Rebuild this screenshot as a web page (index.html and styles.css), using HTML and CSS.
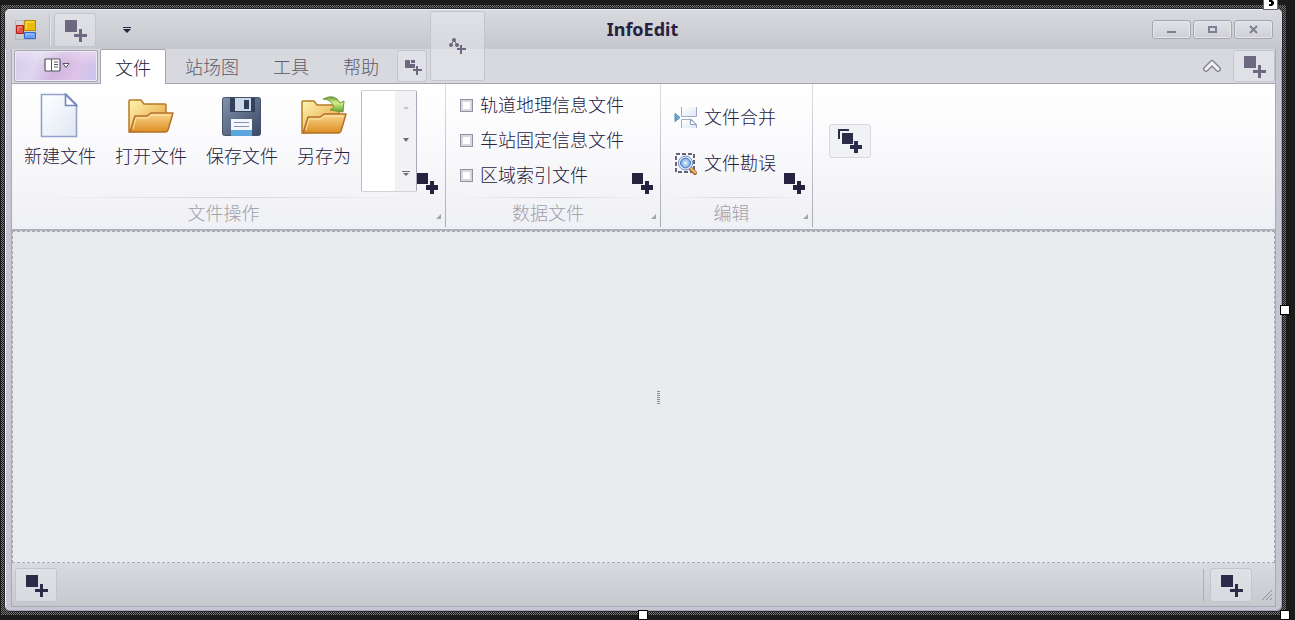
FILE: index.html
```html
<!DOCTYPE html>
<html lang="zh-CN">
<head>
<meta charset="utf-8">
<title>InfoEdit</title>
<link rel="stylesheet" href="styles.css">
</head>
<body>
<svg class="defs" aria-hidden="true">
  <defs>
    <linearGradient id="gold" x1="0" y1="0" x2="1" y2="1"><stop offset="0" stop-color="#fff5b0"/><stop offset="1" stop-color="#e39a35"/></linearGradient>
    <linearGradient id="goldFront" x1="0" y1="0" x2="0" y2="1"><stop offset="0" stop-color="#fbd58c"/><stop offset="1" stop-color="#dc8f24"/></linearGradient>
    <linearGradient id="paper" x1="0" y1="0" x2="1" y2="1"><stop offset="0" stop-color="#ffffff"/><stop offset="1" stop-color="#dfe7f4"/></linearGradient>
    <linearGradient id="steel" x1="0" y1="0" x2="1" y2="1"><stop offset="0" stop-color="#8194ad"/><stop offset="1" stop-color="#3b4663"/></linearGradient>
    <linearGradient id="leaf" x1="0" y1="0" x2="0" y2="1"><stop offset="0" stop-color="#6b9a3c"/><stop offset="0.4" stop-color="#d6f08a"/><stop offset="1" stop-color="#5fa02c"/></linearGradient>
    <radialGradient id="lens"><stop offset="0" stop-color="#e6f6ff"/><stop offset="1" stop-color="#6fa3df"/></radialGradient>
    <symbol id="add" viewBox="0 0 22 22"><path d="M0 0h12v12H0zM14 9h3v5h5v3h-5v5h-3v-5H9v-3h5z" fill="currentColor"/></symbol>
    <symbol id="add-bold" viewBox="0 0 22 22"><path d="M0 0h11v11H0zM13 8h4v4h4v5h-4v4h-4v-4H9v-5h4z" fill="currentColor"/></symbol>
    <symbol id="folder" viewBox="0 0 48 48">
      <path d="M2 40V9q0-1 1-1h11l3 4h21q1 0 1 1v25z" fill="url(#gold)" stroke="#b67a26" stroke-width="1.500"/>
      <path d="M3 40 8 24h12l4-3h22l-5 17q-1 2-2 2z" fill="url(#goldFront)" stroke="#b4702a" stroke-width="1.500" stroke-linejoin="round"/>
      <path d="M6 37 9 26h12l4-3h18" fill="none" stroke="#ffe7ad"/>
    </symbol>
  </defs>
</svg>
<div class="selection">
  <main class="window">
    <header class="titlebar">
      <svg class="app-icon" viewBox="0 0 22 22" role="img" aria-label="InfoEdit">
        <path d="M.5 1.500h20v19H.5zM9 1v20M0 14h20" fill="none" stroke="#b5b7bd"/>
        <path d="M9.500 1.500h11v10h-11z" fill="#eeb90d" stroke="#b98708"/><path d="M11 10V3h8" fill="none" stroke="#ffe574"/>
        <path d="M1.500 6.500h7v8h-7z" fill="#df5145" stroke="#b61f18"/><path d="M3 12V8h4" fill="none" stroke="#f7aaa0"/>
        <path d="M9.500 13.500h11v6h-11z" fill="#6fa0f5" stroke="#3669c6"/><path d="M11 17v-2h8" fill="none" stroke="#a9caff"/>
      </svg>
      <span class="quick-rule"></span>
      <button class="add-button dim" aria-label="添加快速访问项"><svg class="add-icon"><use href="#add"/></svg></button>
      <button class="plain quick-menu" aria-label="自定义快速访问"><svg width="8" height="6" viewBox="0 0 8 6"><path d="M0 0h8v1H0zM0 2h8L4 6z" fill="#25213f"/></svg></button>
      <h1 class="title">InfoEdit</h1>
      <div class="window-buttons">
        <button aria-label="最小化"><svg width="10" height="10" viewBox="0 0 10 10"><path d="M0 6h9v2H0z" fill="#817f92"/></svg></button>
        <button aria-label="最大化"><svg width="10" height="10" viewBox="0 0 10 10"><path d="M1 2h7v5H1z" fill="none" stroke="#817f92" stroke-width="2"/></svg></button>
        <button aria-label="关闭"><svg width="10" height="10" viewBox="0 0 10 10"><path d="M1 1l7 7M8 1 1 8" stroke="#817f92" stroke-width="2"/></svg></button>
      </div>
    </header>
    <div class="content">
      <nav class="tabs">
        <button class="app-menu" aria-label="应用程序菜单">
          <svg width="26" height="14" viewBox="0 0 26 14"><rect x="1" y="1" width="15" height="12" rx="1" fill="#fff" stroke="#56535f" stroke-width="1.200"/><path d="M7.500 1v12M10 4h4M10 6.500h4M10 9h4" stroke="#56535f" fill="none"/><path d="M19 5.500h6l-3 4z" fill="#fff" stroke="#56535f"/></svg>
        </button>
        <button class="tab active">文件</button>
        <button class="tab first">站场图</button>
        <button class="tab">工具</button>
        <button class="tab">帮助</button>
        <button class="add-button page-add dim" aria-label="添加页"><svg width="17" height="15" viewBox="0 0 17 15"><path d="M1 0h3q1 0 1 1v3h5v4H1Q0 8 0 7V1q0-1 1-1zM6 0h4v3H6zM11 6h2v3h4v2h-4v4h-2v-4H8V9h3z" fill="currentColor"/></svg></button>
        <span class="spacer"></span>
        <button class="plain collapse" aria-label="折叠功能区"><svg width="20" height="16" viewBox="0 0 20 16"><path d="m4 11 6-6 6 6" fill="none" stroke="#878792" stroke-width="6" stroke-linecap="round" stroke-linejoin="round"/><path d="m4 11 6-6 6 6" fill="none" stroke="#f3f3f6" stroke-width="3" stroke-linecap="round"/></svg></button>
        <button class="add-button dim" aria-label="添加页眉项"><svg class="add-icon"><use href="#add"/></svg></button>
      </nav>
      <section class="ribbon">
        <section class="group">
          <div class="group-body file-body">
            <button class="plain large"><svg class="large-icon" viewBox="0 0 48 48"><path d="M5.500 2.500h25l10 10v32h-35z" fill="url(#paper)" stroke="#92a2cd" stroke-width="1.600"/><path d="M29.500 2.500v11h11z" fill="#fff" stroke="#7484b8" stroke-width="1.600"/></svg>新建文件</button>
            <button class="plain large"><svg class="large-icon"><use href="#folder"/></svg>打开文件</button>
            <button class="plain large"><svg class="large-icon" viewBox="0 0 48 48"><rect x="4.500" y="5.500" width="38" height="38" rx="2" fill="url(#steel)" stroke="#46516d"/><path d="M12 6h25v14H12z" fill="#35405c"/><path d="M17 6h16v13H17z" fill="#c9d9e8"/><path d="M26 8h5v9h-5z" fill="#303a56"/><path d="M13 27h21v17H13z" fill="#f4f8fd"/><path d="M13 38h21v6H13z" fill="#5aa6dd"/><path d="M16 30.500h15M16 34.500h15" stroke="#8791bb"/></svg>保存文件</button>
            <button class="plain large"><svg class="large-icon" viewBox="0 0 48 48"><g transform="translate(0 1)"><use href="#folder"/></g><path d="M23 7q12-6 17 4l4-2-1 11-13-2 4-3q-3-8-11-8z" fill="url(#leaf)" stroke="#71953f"/></svg>另存为</button>
            <div class="gallery">
              <div class="gallery-nav">
                <button class="plain" aria-label="上一行"><svg width="8" height="5" viewBox="0 0 8 5"><path d="M1 4h6L4 1z" fill="#c3c3ca"/></svg></button>
                <button class="plain" aria-label="下一行"><svg width="8" height="5" viewBox="0 0 8 5"><path d="M1 0h6L4 4z" fill="#6d6c7d"/></svg></button>
                <button class="plain" aria-label="更多"><svg width="8" height="6" viewBox="0 0 8 6"><path d="M0 0h8v1H0zM1 2h6L4 5z" fill="#6d6c7d"/></svg></button>
              </div>
            </div>
            <button class="plain group-add" aria-label="添加项"><svg class="add-icon"><use href="#add-bold"/></svg></button>
          </div>
          <footer class="caption">文件操作</footer>
        </section>
        <section class="group data-group">
          <div class="group-body">
            <div class="checks">
              <label><input type="checkbox">轨道地理信息文件</label>
              <label><input type="checkbox">车站固定信息文件</label>
              <label><input type="checkbox">区域索引文件</label>
            </div>
            <button class="plain group-add" aria-label="添加项"><svg class="add-icon"><use href="#add-bold"/></svg></button>
          </div>
          <footer class="caption">数据文件</footer>
        </section>
        <section class="group edit-group">
          <div class="group-body">
            <div class="edits">
              <button class="plain small"><svg width="24" height="24" viewBox="0 0 24 24"><path d="M1 7.500v8L6 11.500z" fill="#67a8dc" stroke="#5089b8"/><path d="M7.500 1v9.500h15V1" fill="url(#paper)" stroke="#9eabc8"/><path d="M7.500 22v-8.500h10l5 5V22" fill="url(#paper)" stroke="#9eabc8"/><path d="M16.500 13.500v5h6z" fill="#fff" stroke="#8b98b8"/></svg>文件合并</button>
              <button class="plain small"><svg width="24" height="24" viewBox="0 0 24 24"><path d="M2 2h18v18H2z" fill="none" stroke="#343652" stroke-width="1.500" stroke-dasharray="4 2"/><path d="m16 16 5 5" stroke="#a8672c" stroke-width="4" stroke-linecap="round"/><path d="m16.500 16 4.500 4.500" stroke="#f2bd77" stroke-width="2" stroke-linecap="round"/><circle cx="11.500" cy="11" r="7" fill="#eef5ff" stroke="#6f89b9"/><circle cx="11.500" cy="11" r="5" fill="url(#lens)" stroke="#4c78bd"/></svg>文件勘误</button>
            </div>
            <button class="plain group-add" aria-label="添加项"><svg class="add-icon"><use href="#add-bold"/></svg></button>
          </div>
          <footer class="caption">编辑</footer>
        </section>
        <button class="add-button new-group" aria-label="添加组"><svg width="24" height="24" viewBox="0 0 24 24"><path d="M0 0h11v2H2v8H0zM4 4h11v11H4zM16 12h4v4h4v4h-4v4h-4v-4h-4v-4h4z" fill="currentColor"/></svg></button>
      </section>
      <section class="client"><span class="grip"></span></section>
      <footer class="status">
        <button class="add-button" aria-label="添加左侧状态项"><svg class="add-icon"><use href="#add"/></svg></button>
        <span class="spacer"></span>
        <span class="status-rule"></span>
        <button class="add-button" aria-label="添加右侧状态项"><svg class="add-icon"><use href="#add"/></svg></button>
        <svg class="sizer" width="12" height="12" viewBox="0 0 12 12"><path d="M1 11 11 1M5 11l6-6M9 11l2-2" stroke="#8d8e97"/></svg>
      </footer>
    </div>
    <button class="add-button context-add dim" aria-label="添加页类别"><svg width="17" height="16" viewBox="0 0 17 16"><path d="M5 2 2 7m3-5 3 5" stroke="currentColor"/><circle cx="5" cy="2" r="2" fill="currentColor"/><circle cx="2" cy="7" r="2" fill="currentColor"/><circle cx="8" cy="7" r="2" fill="currentColor"/><path d="M11 7h2v3h4v2h-4v4h-2v-4H8v-2h3z" fill="currentColor"/></svg></button>
  </main>
  <span class="handle east"></span>
  <span class="handle south"></span>
  <span class="handle corner"></span>
  <span class="glyph"><svg width="12" height="9" viewBox="0 0 12 9"><path d="M5 0h3l2 2v2L8 6H5V4h2V2H5z"/></svg></span>
</div>
</body>
</html>
```

FILE: styles.css
```css
* { box-sizing: border-box; }

body {
  display: flex;
  height: 100vh;
  margin: 0;
  padding: 5px 9px 5px 1px;
  overflow: hidden;
  background: #1b1b1b;
  color: #25213f;
  font-family: "Liberation Sans", "Noto Sans CJK SC", sans-serif;
  font-size: 18px;
  font-weight: 300;
  line-height: 24px;
}

button {
  margin: 0;
  padding: 0;
  color: inherit;
  font: inherit;
}

svg { display: block; flex: none; }

.defs { position: absolute; width: 0; height: 0; }

.plain { border: 0; background: none; }

.spacer { flex: 1; }

.selection {
  position: relative;
  display: flex;
  flex: 1;
  padding: 3px;
  background: repeating-conic-gradient(#77756f 0 25%, #1b1b1b 0 50%) 0 0 / 2px 2px;
}

.window {
  position: relative;
  display: flex;
  flex: 1;
  flex-direction: column;
  overflow: hidden;
  border: 1px solid #282936;
  border-radius: 6px;
  background: #c5c6cf;
  box-shadow: inset 1px 1px #eeeef3, inset -1px -1px #a4a5b5;
}

.titlebar {
  display: flex;
  align-items: center;
  height: 40px;
  padding: 0 9px 0 10px;
  border-top: 1px solid #f0f0f4;
  background: linear-gradient(#d9dae0, #c6c7cd);
}

.app-icon { width: 22px; height: 22px; }

.quick-rule {
  width: 2px;
  height: 32px;
  margin: 0 3px 0 12px;
  border-left: 1px solid #bcbdc5;
  border-right: 1px solid #e6e6eb;
}

.quick-menu { display: grid; place-items: center; width: 20px; height: 24px; margin-left: 21px; }

.title {
  flex: 1;
  margin: 0;
  padding: 0 4px 2px 0;
  color: #25213f;
  font: bold 18px/24px "Noto Sans", sans-serif;
  text-align: center;
}

.window-buttons { display: flex; gap: 2px; }

.window-buttons button {
  display: grid;
  place-items: center;
  width: 39px;
  height: 19px;
  border: 1px solid #a5a6b2;
  border-radius: 3px;
  background: linear-gradient(#e1e2e7, #cfd0d6);
  box-shadow: inset 0 0 0 1px #e5e5ea;
}

.add-button {
  display: grid;
  flex: none;
  place-items: center;
  width: 42px;
  height: 34px;
  padding: 2px 0 0 2px;
  border: 1px solid #c4c5cc;
  border-radius: 3px;
  background: rgba(232, 233, 238, 0.5);
  color: #2d2a4a;
}

.dim { color: #6b687f; }

.add-icon { width: 22px; height: 22px; }

.context-add {
  position: absolute;
  top: 2px;
  left: 425px;
  width: 55px;
  height: 70px;
  padding: 0;
}

.content {
  display: flex;
  flex: 1;
  flex-direction: column;
  margin: 0 6px 4px 6px;
  border: 1px solid #a9aab7;
  border-top: 0;
}

.tabs {
  display: flex;
  height: 35px;
  padding: 0 0 0 2px;
  border-bottom: 1px solid #a5a6b2;
  background: #d8d9de;
}

.tabs .add-button { height: 32px; margin-top: 1px; }

.app-menu {
  display: grid;
  place-items: center;
  width: 84px;
  height: 32px;
  margin: 1px 2px 0 0;
  padding: 0 0 2px 2px;
  border: 1px solid #a6a3b4;
  border-radius: 2px;
  background:
    linear-gradient(#fff5, transparent 45%),
    linear-gradient(115deg, #d5c9ec, #dfd7f0 28%, #d0b5e0 52%, #dec4e8 75%, #c6c5ee);
  box-shadow: inset 0 0 0 1px #eeeaf4;
}

.tab {
  padding: 3px 17px 0;
  border: 0;
  background: none;
  color: #5c5a6b;
}

.tab.first { margin-left: 2px; }

.tab.active {
  height: 35px;
  padding: 3px 14px 0;
  border: 1px solid #a5a6b2;
  border-bottom: 0;
  border-radius: 2px 2px 0 0;
  background: #fff;
  color: #25213f;
}

.tabs .page-add { width: 30px; margin-left: 1px; }

.collapse { width: 42px; display: grid; place-items: center; }

.ribbon {
  display: flex;
  height: 147px;
  border-bottom: 2px solid #b0b1bb;
  background: linear-gradient(#fff 0, #fbfbfd 35%, #eff0f4);
}

.group {
  display: flex;
  flex-direction: column;
  margin-bottom: 2px;
  border-right: 1px solid;
  border-image: linear-gradient(#dedfe4, #aaabb5) 1;
}

.group-body { display: flex; flex: 1; justify-content: space-between; }

.file-body { gap: 19px; padding-left: 12px; }

.large {
  display: flex;
  flex-direction: column;
  align-items: center;
  gap: 5px;
  padding-top: 8px;
}

.large-icon { width: 48px; height: 48px; }

.gallery {
  display: flex;
  justify-content: flex-end;
  width: 56px;
  height: 102px;
  margin: 6px 0 0 -9px;
  border: 1px solid #d2d3da;
  border-left-color: #b8b9c5;
  border-right-color: #a8a9b8;
  border-radius: 2px;
  background: #fff;
}

.gallery-nav { display: grid; width: 21px; background: #f2f2f5; }

.gallery-nav button { display: grid; place-items: center; }

.group-add { align-self: flex-end; margin: 0 6px 2px 0; }

.file-body .group-add { margin-left: -19px; }

.caption {
  position: relative;
  height: 30px;
  padding: 4px 10px 0 0;
  border-top: 1px solid;
  border-image: linear-gradient(90deg, transparent 5%, #d5d6dd 50%, transparent 95%) 1;
  color: #a1a0ab;
  text-align: center;
}

.caption::after {
  content: "";
  position: absolute;
  right: 4px;
  bottom: 8px;
  border-bottom: 5px solid #a4a4ae;
  border-left: 5px solid transparent;
}

.data-group { width: 215px; }

.checks { display: flex; flex-direction: column; gap: 11px; padding: 10px 0 0 14px; }

.checks label { display: flex; align-items: center; gap: 7px; white-space: nowrap; }

.checks input {
  appearance: none;
  width: 13px;
  height: 13px;
  margin: 0 0 2px;
  border: 1px solid #9293a0;
  background: #fff;
  box-shadow: inset 0 0 0 2px #d7d8df;
}

.data-group .group-add,
.edit-group .group-add { margin-left: -24px; }

.edit-group { width: 152px; }

.edits { display: flex; flex-direction: column; gap: 22px; padding: 22px 0 0 13px; }

.small { display: flex; align-items: center; gap: 6px; white-space: nowrap; }

.new-group { margin: 40px 0 0 16px; padding: 0; border-color: #d8d9df; }

.client {
  display: grid;
  flex: 1;
  place-items: center;
  border: 1px dashed #a9aab0;
  background: #eaebef;
}

.grip {
  width: 3px;
  height: 13px;
  margin-left: 30px;
  background: repeating-linear-gradient(#8b8c92 0 1px, transparent 1px 2px);
}

.status {
  display: flex;
  align-items: center;
  height: 43px;
  padding: 0 1px 0 3px;
  background: linear-gradient(#dadbe0, #c7c8ce);
}

.status-rule { width: 1px; height: 32px; margin-right: 6px; background: #acadb6; }

.sizer { align-self: flex-end; margin: 0 1px 5px 9px; }

.handle {
  position: absolute;
  width: 10px;
  height: 10px;
  border: 1px solid #000;
  background: #fff;
}

.east { top: 50%; right: -4px; margin-top: -5px; }

.south { bottom: -5px; left: 50%; margin-left: -6px; }

.corner { right: -4px; bottom: -5px; }

.glyph {
  position: absolute;
  top: -5px;
  right: 8px;
  width: 15px;
  height: 10px;
  border: 1px solid #66666c;
  border-top: 0;
  background: #fff;
}
```
